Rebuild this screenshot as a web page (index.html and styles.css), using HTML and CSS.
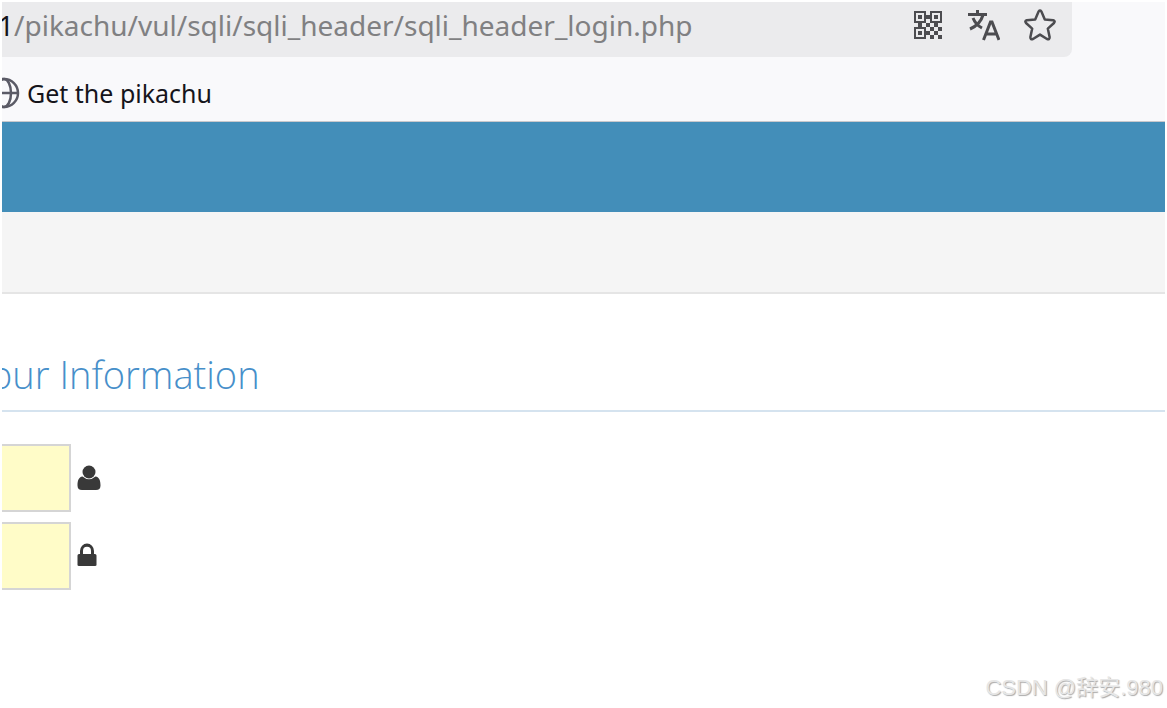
FILE: index.html
```html
<!DOCTYPE html>
<html lang="en">
<head>
<meta charset="utf-8">
<title>Get the pikachu</title>
<link rel="stylesheet" href="styles.css">
</head>
<body>
<div class="window">
  <div class="toolbar">
    <div class="address">
      <div class="url"><span class="host">1</span>/pikachu/vul/sqli/sqli_header/sqli_header_login.php</div>
      <div class="actions">
        <button class="action" aria-label="QR code">
          <svg width="32" height="32" viewBox="0 0 32 32" fill="#4c4c50" shape-rendering="crispEdges">
            <path fill-rule="evenodd" d="M2 2h12v12H2zM4 4v8h8V4zM18 2h12v12H18zM20 4v8h8V4zM2 18h12v12H2zM4 20v8h8v-8z"/>
            <path d="M6 6h4v4H6zM22 6h4v4h-4zM6 22h4v4H6zM14 6h4v4h-4zM6 14h4v4H6zM22 14h4v4h-4zM14 14h4v4h-4zM18 18h4v4h-4zM26 18h4v4h-4zM14 22h4v4h-4zM22 22h4v4h-4zM18 26h4v4h-4zM26 26h4v4h-4z"/>
          </svg>
        </button>
        <button class="action" aria-label="Translate">
          <svg width="32" height="32" viewBox="0 0 32 32" fill="none" stroke="#4c4c50" stroke-width="3">
            <path d="M0 5.500h19M9.500 1v4M15 6C13 13 9 17 2 20M5 9c2 5 5 8 9 10M15.500 31l7-18h1.500l7 18M17.500 25h11.500"/>
          </svg>
        </button>
        <button class="action" aria-label="Bookmark this page">
          <svg width="32" height="32" viewBox="0 0 32 32" fill="none" stroke="#4c4c50" stroke-width="2.500" stroke-linejoin="round">
            <path d="M14.600 2.400Q16 .6 17.400 2.400L20.800 10.400 29.200 11.200Q31.600 12 30 14L23.800 19.600 25.600 28Q25.800 30.800 23 30L16 25.600 9 30Q6.200 30.800 6.400 28L8.200 19.600 2 14Q.4 12 2.800 11.200L11.200 10.400Z"/>
          </svg>
        </button>
      </div>
    </div>
  </div>
  <div class="bookmarks">
    <a class="bookmark" href="#">
      <svg class="globe" width="32" height="32" viewBox="0 0 32 32" fill="none" stroke="#5b5b66" stroke-width="2.500">
        <circle cx="16" cy="16" r="14"/><ellipse cx="16" cy="16" rx="7" ry="14"/><path d="M2 16h28"/>
      </svg>
      <span>Get the pikachu</span>
    </a>
  </div>
  <header class="navbar"></header>
  <div class="breadcrumbs"></div>
  <main class="content">
    <h1 class="title">our Information</h1>
    <form class="login">
      <div class="field">
        <input class="box" type="text" aria-label="Username">
        <svg width="24" height="26" viewBox="0 0 24 26" fill="#393939">
          <circle cx="12" cy="7" r="6.500"/><path d="M5.500 11.500C1.500 12 .5 16 .5 20.500q0 4.500 4.500 4.500h14q4.500 0 4.500-4.500c0-4.500-1-8.500-5-9q-6.500 5.500-13 0Z"/>
        </svg>
      </div>
      <div class="field">
        <input class="box" type="password" aria-label="Password">
        <svg width="24" height="26" viewBox="0 0 24 26" fill="#393939">
          <path fill-rule="evenodd" d="M3 11V8a6.500 7 0 0 1 14 0v3h1q1.500 0 1.500 1.500v9.500q0 1-1.500 1H2q-1.500 0-1.500-1v-9.500Q.5 11 2 11ZM6 11h8V8a4 4.200 0 0 0-8 0Z"/>
        </svg>
      </div>
    </form>
  </main>
  <footer class="watermark">CSDN @辞安.980</footer>
</div>
</body>
</html>
```
FILE: styles.css
```css
* { box-sizing: border-box; }
body { margin: 0; background: #fff; font-family: "Open Sans", "Noto Sans", sans-serif; }
.window {
  display: flex;
  flex-direction: column;
  min-height: 100vh;
  padding: 2px;
  overflow: hidden;
}
.toolbar { padding-right: 93px; background: #f9f9fb; }
.address {
  display: flex;
  align-items: center;
  justify-content: space-between;
  height: 55px;
  padding-right: 16px;
  background: #ebebed;
  border-radius: 0 0 8px 0;
  overflow: hidden;
}
.url {
  margin-left: -4px;
  padding-bottom: 10px;
  font-family: "Noto Sans", sans-serif;
  font-size: 28px;
  line-height: 40px;
  white-space: nowrap;
  color: #808082;
}
.host { color: #15141a; }
.actions { display: flex; gap: 24px; padding-bottom: 10px; }
.action { display: flex; padding: 0; border: 0; background: none; }
.bookmarks {
  display: flex;
  align-items: center;
  height: 65px;
  padding-top: 8px;
  background: #f9f9fb;
  border-bottom: 1px solid #c8c8cc;
  overflow: hidden;
}
.bookmark {
  display: flex;
  align-items: center;
  gap: 7px;
  margin-left: -14px;
  font-family: "Noto Sans", sans-serif;
  font-size: 25px;
  line-height: 36px;
  color: #15141a;
  text-decoration: none;
}
.navbar { height: 90px; background: #438eb9; }
.breadcrumbs { height: 82px; background: #f5f5f5; border-bottom: 2px solid #e5e5e5; }
.content { flex: 1; overflow: hidden; }
.title {
  margin: 57px 0 32px;
  padding-bottom: 13px;
  border-bottom: 2px solid #d5e3ef;
  font-size: 38px;
  font-weight: 300;
  line-height: 46px;
  text-indent: -12px;
  color: #478fca;
  overflow: hidden;
}
.login { display: flex; flex-direction: column; gap: 10px; }
.field { display: flex; align-items: center; gap: 6px; }
.box {
  width: 69px;
  height: 68px;
  padding: 8px;
  border: 2px solid #d5d5d5;
  border-left: 0;
  border-radius: 0;
  background: #fffcc8;
  font-size: 28px;
}
.watermark {
  align-self: flex-end;
  padding: 0 2px 2px 0;
  font-family: "Liberation Sans", "Noto Sans CJK SC", sans-serif;
  font-size: 22px;
  line-height: 32px;
  color: #e6e6e6;
  text-shadow: 1px 1px 1px #aaa;
}
```
